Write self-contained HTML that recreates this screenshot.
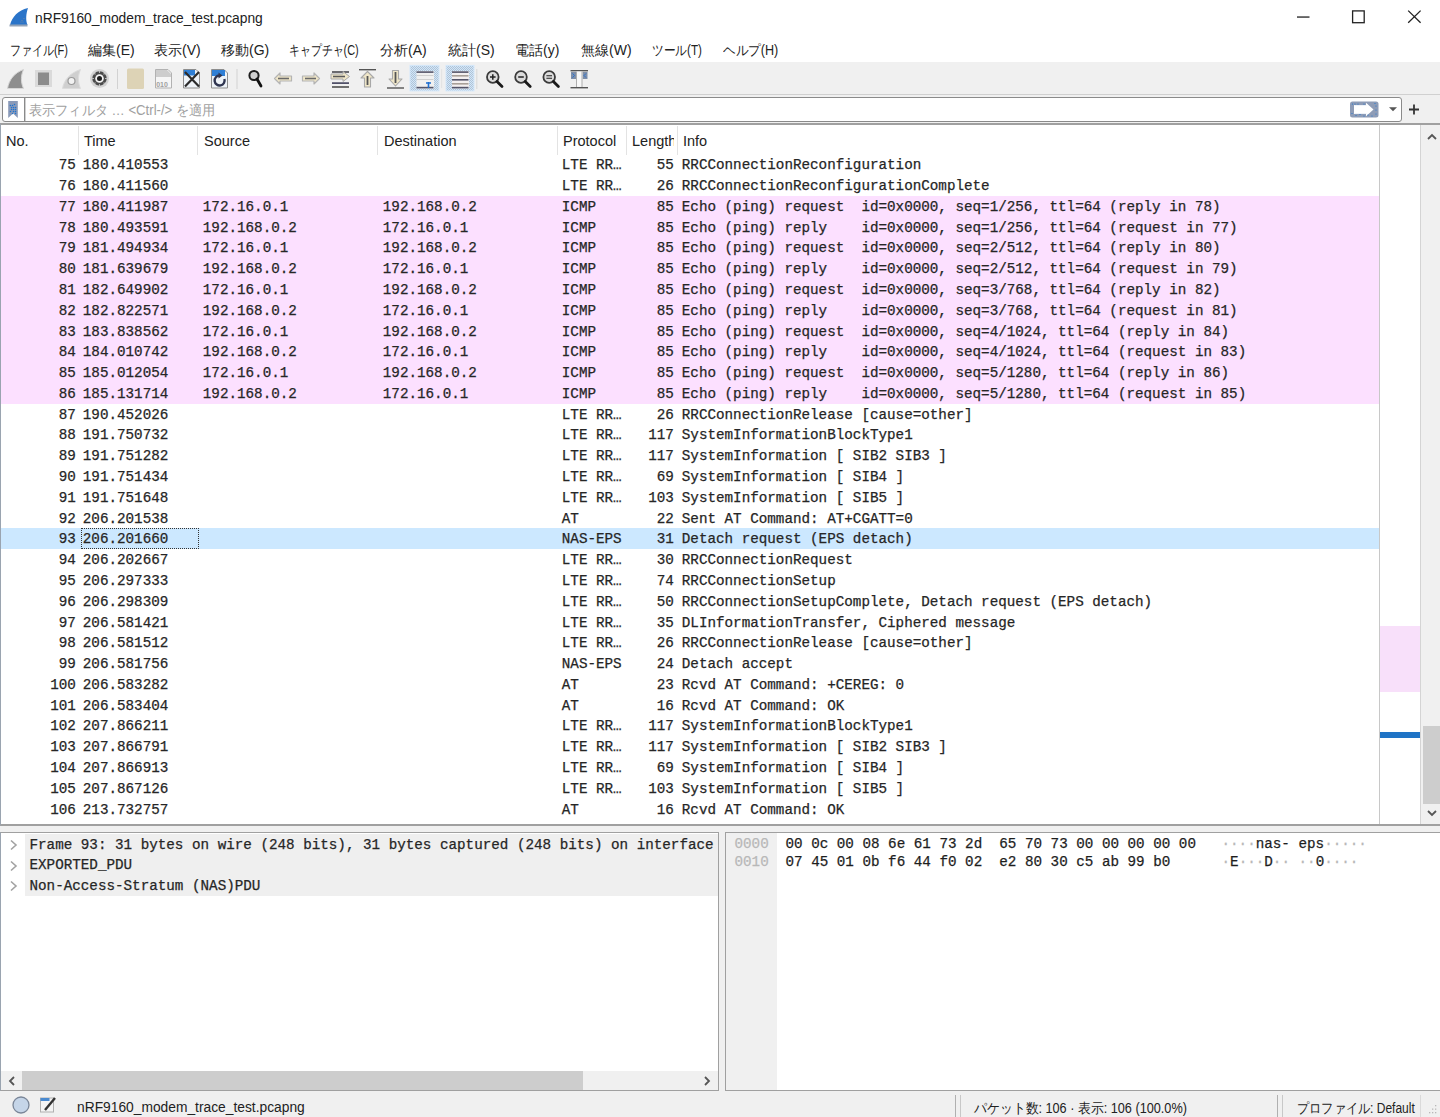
<!DOCTYPE html>
<html><head><meta charset="utf-8">
<style>
*{margin:0;padding:0;box-sizing:border-box}
html,body{width:1440px;height:1117px;overflow:hidden;background:#f0f0f0;font-family:"Liberation Sans",sans-serif;color:#000}
.abs{position:absolute}
#title{left:0;top:0;width:1440px;height:33px;background:#fff}
#title .t{left:35px;top:11px;font-size:13.8px;color:#222;white-space:nowrap}
#menu{left:0;top:33px;width:1440px;height:29px;background:#fff}
#menu span{position:absolute;top:9px;font-size:14px;color:#222;white-space:nowrap;transform-origin:0 50%}
#tool{left:0;top:62px;width:1440px;height:33px;background:#f0f0f0;border-bottom:1px solid #d0d0d0}
#filt{left:0;top:95px;width:1440px;height:29px;background:#f0f0f0}
#fbox{left:2px;top:97px;width:1400px;height:24.5px;background:#fff;border:1.3px solid #8a8a8a;border-radius:3px}
#fbox .ph{position:absolute;left:26px;top:4px;font-size:14px;color:#a0a0a0;white-space:nowrap;transform:scaleX(0.94);transform-origin:0 50%}
#plist{left:0;top:122.8px;width:1440px;height:703.5px;background:#fff;border-top:2.2px solid #a0a0a0;border-left:1px solid #9aa4b0;border-bottom:2px solid #a0a0a0;overflow:hidden}
.hdr{position:absolute;top:0;height:30px;font-size:14.5px;color:#222}
.hdr span{position:absolute;top:8.5px;white-space:nowrap}
.hsep{position:absolute;top:1px;width:1px;height:29px;background:#e3e3e3}
.r{position:absolute;left:0;width:1378px;height:20.8px;font-family:"Liberation Mono",monospace;font-size:14.25px;color:#262626;white-space:pre;-webkit-text-stroke:0.25px #262626}
.r.pk{background:#fce0ff}
.r.sel{background:#cce8ff}
.focus{position:absolute;left:80px;top:0;width:117.5px;height:20.5px;border:1px dotted #333}
.c{position:absolute;top:3.2px}
.no{right:1303.2px;text-align:right}
.tm{left:81.8px}
.src{left:201.8px}
.dst{left:381.8px}
.pr{left:560.8px}
.ln{right:705.2px;text-align:right}
.inf{left:680.8px}

#det{left:0;top:832px;width:719px;height:259px;background:#fff;border:1px solid #a0a0a0;border-left-color:#9aa4b0;overflow:hidden}
.drow{position:absolute;left:24px;width:700px;height:20.8px;background:#efefef}
.dtx{position:absolute;left:28.5px;font-family:"Liberation Mono",monospace;font-size:14.25px;color:#262626;white-space:pre;-webkit-text-stroke:0.25px #262626}
.arr{position:absolute;left:8px}
#hex{left:724.5px;top:832px;width:715.5px;height:259px;background:#fff;border:1px solid #a0a0a0;border-right:none;overflow:hidden}
.htx{position:absolute;font-family:"Liberation Mono",monospace;font-size:14.25px;color:#1e1e1e;white-space:pre;-webkit-text-stroke:0.25px currentColor}
.off{color:#b8b8b8}
.nd{color:#b8b8b8}
#status{left:0;top:1091px;width:1440px;height:26px;background:#f0f0f0}
#status .st{position:absolute;top:9px;font-size:13.8px;color:#222;white-space:nowrap;transform-origin:0 50%}
.vsep{position:absolute;top:4px;width:1.3px;height:22px;background:#b0b0b0}
</style></head><body>
<div id="title" class="abs">
  <svg class="abs" style="left:0;top:0" width="40" height="33" viewBox="0 0 40 33"><path d="M10 25 C12 17 18 10 28 8 C26 14 25.5 20 27.5 25 Z" fill="#2a74c9"/><rect x="9.5" y="24.5" width="18" height="2" fill="#93a3b8"/><g fill="#7a8aa0"><circle cx="22" cy="20.5" r="0.6"/><circle cx="24" cy="18.5" r="0.6"/><circle cx="21" cy="22" r="0.6"/><circle cx="23" cy="22" r="0.6"/></g></svg>
  <div class="abs t">nRF9160_modem_trace_test.pcapng</div>
  <svg class="abs" style="left:1296px;top:10px" width="130" height="16" viewBox="0 0 130 16"><rect x="1" y="6.4" width="12.5" height="1.3" fill="#222"/><rect x="56.6" y="0.9" width="11.6" height="11.8" fill="none" stroke="#222" stroke-width="1.3"/><path d="M112.2 0.6 L124.6 12.8 M124.6 0.6 L112.2 12.8" stroke="#222" stroke-width="1.3"/></svg>
</div>
<div id="menu" class="abs">
  <span style="left:10px;transform:scaleX(0.785)">ファイル(F)</span>
  <span style="left:88px">編集(E)</span>
  <span style="left:154px">表示(V)</span>
  <span style="left:221px">移動(G)</span>
  <span style="left:289px;transform:scaleX(0.78)">キャプチャ(C)</span>
  <span style="left:380px">分析(A)</span>
  <span style="left:448px">統計(S)</span>
  <span style="left:515px">電話(y)</span>
  <span style="left:581px">無線(W)</span>
  <span style="left:652px;transform:scaleX(0.835)">ツール(T)</span>
  <span style="left:723px;transform:scaleX(0.9)">ヘルプ(H)</span>
</div>
<div id="tool" class="abs">
<svg class="abs" style="left:0;top:0" width="600" height="32" viewBox="0 62 600 32">
  <defs>
    <pattern id="dith" width="2" height="2" patternUnits="userSpaceOnUse"><rect width="2" height="2" fill="#d2e6f8"/><rect width="1" height="1" fill="#b0c4d8"/><rect x="1" y="1" width="1" height="1" fill="#b0c4d8"/></pattern>
  </defs>
  <!-- 1 shark fin gray -->
  <path d="M7.5 88.5 C9 80 14 73 23.5 69.5 C21 75 20.5 82 23.5 88.5 Z" fill="#8e8e8e" stroke="#d6d6d6" stroke-width="1"/>
  <!-- 2 stop -->
  <rect x="35" y="70" width="17" height="17" fill="#dadada"/>
  <rect x="38" y="72.5" width="11" height="12.5" fill="#8c8c8c"/>
  <!-- 3 restart -->
  <path d="M62.5 88.5 C64 80 70 73 80.5 69.5 C78 75 77.5 82 80.5 88.5 Z" fill="#cfcfcf" stroke="#dcdcdc" stroke-width="1"/>
  <circle cx="71.5" cy="81" r="3.5" fill="#f2f2f2" stroke="#9a9a9a" stroke-width="1.2"/>
  <!-- 4 gear -->
  <circle cx="99.5" cy="78.5" r="9.5" fill="#d2d2d2"/>
  <circle cx="99.5" cy="78.5" r="7.2" fill="#4a4a4a"/>
  <circle cx="99.5" cy="78.5" r="4.3" fill="#f2f2f2"/>
  <circle cx="99.5" cy="78.5" r="2.5" fill="#1e1e1e"/>
  <g stroke="#d8d8d8" stroke-width="1.1"><path d="M99.5 71.3 V72.8 M99.5 84.2 V85.7 M92.3 78.5 H93.8 M105.2 78.5 H106.7 M94.4 73.4 L95.4 74.4 M103.6 82.6 L104.6 83.6 M104.6 73.4 L103.6 74.4 M95.4 82.6 L94.4 83.6"/></g>
  <rect x="117" y="69" width="1" height="20" fill="#d2d2d2"/>
  <!-- 6 open -->
  <rect x="127" y="68.5" width="17" height="20.5" rx="1.5" fill="#ddd3b6"/>
  <!-- 7 save -->
  <path d="M155.5 69.5 H168 L171.5 73 V88 H155.5 Z" fill="#f6f6f6" stroke="#b2b2b2" stroke-width="1"/>
  <path d="M156 70 H167 L171 74 V77 H156 Z" fill="#cdcdcd"/>
  <text x="156.2" y="86.5" font-family="Liberation Sans" font-weight="bold" font-size="7" fill="#a0a0a0">010</text>
  <!-- 8 close -->
  <path d="M183.5 69.5 H196 L199.5 73 V88 H183.5 Z" fill="#eef3f8" stroke="#8d8d8d" stroke-width="1"/>
  <rect x="184" y="70" width="11" height="5.5" fill="#2e7fd6"/>
  <path d="M185 72 L199 86.5 M199 72 L185 86.5" stroke="#2b2b2b" stroke-width="2.2"/>
  <!-- 9 reload -->
  <path d="M211.5 69.5 H224 L227.5 73 V88 H211.5 Z" fill="#eef3f8" stroke="#8d8d8d" stroke-width="1"/>
  <rect x="212" y="70" width="13" height="6" fill="#2e7fd6"/>
  <path d="M224.4 79 A5 5 0 1 1 219.5 75.5" fill="none" stroke="#2f3550" stroke-width="2.4"/><path d="M218.5 72.5 L222.5 75.5 L218.5 78.5 Z" fill="#2f3550"/>
  <rect x="236.5" y="69" width="1" height="20" fill="#d2d2d2"/>
  <!-- 11 find -->
  <circle cx="254" cy="75.5" r="4.6" fill="#cfcfcf" stroke="#1d1d1d" stroke-width="2"/>
  <path d="M257 79 L261 86" stroke="#111" stroke-width="2.8" stroke-linecap="round"/>
  <!-- 12 back -->
  <path d="M274.5 78.5 L280 73 V76 H291.5 V81 H280 V84 Z" fill="#efe6c8" stroke="#b4b4b4" stroke-width="1.2" stroke-linejoin="round"/>
  <path d="M278 78.5 H289" stroke="#6a6a6a" stroke-width="1.6"/>
  <!-- 13 forward -->
  <path d="M319.5 78.5 L314 73 V76 H302.5 V81 H314 V84 Z" fill="#efe6c8" stroke="#b4b4b4" stroke-width="1.2" stroke-linejoin="round"/>
  <path d="M305 78.5 H316" stroke="#6a6a6a" stroke-width="1.6"/>
  <!-- 14 goto -->
  <rect x="332" y="71.2" width="17" height="1.6" fill="#4a4a50"/>
  <rect x="332" y="82.3" width="17" height="1.6" fill="#40405a"/>
  <rect x="332" y="86.2" width="17" height="1.6" fill="#505050"/>
  <path d="M331 74 H343 V71.5 L349.5 76.5 L343 81.5 V79 H331 Z" fill="#efe6c8" stroke="#a8a8a8" stroke-width="1"/>
  <path d="M333 76.5 H345" stroke="#5a5a5a" stroke-width="1.6"/>
  <!-- 15 first -->
  <rect x="359" y="69" width="17" height="1.4" fill="#555"/>
  <path d="M367.5 71.5 L374 78 H370.5 V87 H364.5 V78 H361 Z" fill="#efe6c8" stroke="#a8a8a8" stroke-width="1.1" stroke-linejoin="round"/>
  <path d="M367.5 76 V85" stroke="#555" stroke-width="1.8"/>
  <!-- 16 last -->
  <rect x="387" y="87.3" width="17" height="1.4" fill="#555"/>
  <path d="M395.5 86 L402 79 H398.5 V70.5 H392.5 V79 H389 Z" fill="#efe6c8" stroke="#a8a8a8" stroke-width="1.1" stroke-linejoin="round"/>
  <path d="M395.5 72 V83" stroke="#555" stroke-width="1.8"/>
  <!-- 17 autoscroll -->
  <rect x="410" y="65.4" width="29" height="25.5" fill="url(#dith)" stroke="#d4e8fb" stroke-width="1"/>
  <rect x="416.5" y="71" width="17.5" height="17.5" fill="#f0f0f0"/>
  <rect x="416.5" y="71.3" width="17" height="1.6" fill="#55556a"/>
  <rect x="416.5" y="86.8" width="17" height="1.6" fill="#55556a"/>
  <rect x="416.5" y="75" width="17" height="0.8" fill="#c8c8c8"/>
  <rect x="416.5" y="79" width="17" height="0.8" fill="#c8c8c8"/>
  <path d="M426 83 L431 83 M428.5 82 V88" stroke="#1f6fd0" stroke-width="1.6"/>
  <rect x="441.3" y="69" width="0.8" height="19" fill="#dedede"/>
  <!-- 18 colorize -->
  <rect x="446" y="65.4" width="28" height="25.5" fill="url(#dith)" stroke="#d4e8fb" stroke-width="1"/>
  <rect x="452" y="71" width="17" height="17.5" fill="#f4f0f0"/>
  <rect x="452" y="71.3" width="16.5" height="1.6" fill="#55556a"/>
  <rect x="452" y="75" width="16.5" height="1.6" fill="#a8a098"/>
  <rect x="452" y="79" width="16.5" height="1.6" fill="#55556a"/>
  <rect x="452" y="83" width="16.5" height="1.6" fill="#a8a098"/>
  <rect x="452" y="86.8" width="16.5" height="1.6" fill="#55556a"/>
  <rect x="476.3" y="69" width="1" height="20" fill="#d8d8d8"/>
  <!-- 20 zoom in -->
  <circle cx="492.8" cy="77" r="5.8" fill="#dcdcdc" stroke="#3a3a3a" stroke-width="1.8"/>
  <path d="M490 77 H495.6 M492.8 74.2 V79.8" stroke="#222" stroke-width="1.5"/>
  <path d="M497 81.5 L502 86.5" stroke="#1a1a1a" stroke-width="2.8" stroke-linecap="round"/>
  <!-- 21 zoom out -->
  <circle cx="521" cy="77" r="5.8" fill="#dcdcdc" stroke="#3a3a3a" stroke-width="1.8"/>
  <path d="M518.2 77 H523.8" stroke="#222" stroke-width="1.5"/>
  <path d="M525.2 81.5 L530.2 86.5" stroke="#1a1a1a" stroke-width="2.8" stroke-linecap="round"/>
  <!-- 22 zoom reset -->
  <circle cx="549.2" cy="77" r="5.8" fill="#dcdcdc" stroke="#3a3a3a" stroke-width="1.8"/>
  <path d="M546.4 75.8 H552 M546.4 78.3 H552" stroke="#222" stroke-width="1.1"/>
  <path d="M553.4 81.5 L558.4 86.5" stroke="#1a1a1a" stroke-width="2.8" stroke-linecap="round"/>
  <!-- 23 resize -->
  <rect x="570.5" y="70" width="17.5" height="1.4" fill="#555"/>
  <rect x="570.5" y="87" width="17.5" height="1.4" fill="#555"/>
  <rect x="571" y="72" width="5" height="7" fill="#7f8fa8"/>
  <rect x="582.5" y="72" width="5" height="7" fill="#7f8fa8"/>
  <rect x="576" y="71.5" width="6.5" height="15" fill="#f8f8f8"/>
  <path d="M576.5 71.5 V87 M582 71.5 V87" stroke="#9a9a9a" stroke-width="0.8"/>
  <path d="M572.5 73.5 L574.5 75.5 L572.5 77.5 M586 73.5 L584 75.5 L586 77.5" fill="none" stroke="#2a72d0" stroke-width="1"/>
</svg>
</div>
<div id="filt" class="abs"></div>
<div id="fbox" class="abs">
  <div class="abs ph">表示フィルタ … &lt;Ctrl-/&gt; を適用</div>
</div>
<svg class="abs" style="left:0;top:94px" width="1440" height="30" viewBox="0 94 1440 30">
  <path d="M8.2 101 H17.8 V118 L13 113.5 L8.2 118 Z" fill="#8a9ab8"/>
  <g fill="#1f74d0"><circle cx="10.4" cy="105.5" r="0.75"/><circle cx="12.5" cy="105.5" r="0.75"/><circle cx="14.5" cy="104.5" r="0.75"/><circle cx="11.5" cy="107.5" r="0.75"/><circle cx="13.5" cy="107.5" r="0.75"/><circle cx="15.5" cy="107.5" r="0.75"/><circle cx="11.5" cy="109.5" r="0.75"/><circle cx="13.5" cy="109.5" r="0.75"/><circle cx="15.5" cy="109.5" r="0.75"/><circle cx="10.5" cy="111.5" r="0.75"/><circle cx="13.5" cy="111.5" r="0.75"/><circle cx="15.5" cy="111.5" r="0.75"/><circle cx="12.5" cy="113.5" r="0.75"/><circle cx="15.5" cy="113.5" r="0.75"/></g>
  <rect x="24" y="97.5" width="1.4" height="23.5" fill="#8a8a8a"/>
  <rect x="1350" y="101.5" width="28.5" height="16" rx="2.5" fill="#8e9cb6"/>
  <path d="M1354 105 H1366 V102.8 L1373.5 109.5 L1366 116.2 V114 H1354 Z" fill="#fff"/>
  <path d="M1354.5 105.5 H1366.5 M1354.5 113.5 H1366.5" stroke="#dfe8f4" stroke-width="0.6"/>
  <g fill="#1f74d0"><circle cx="1352.5" cy="104" r="0.6"/><circle cx="1355" cy="104" r="0.6"/><circle cx="1358" cy="104" r="0.6"/><circle cx="1364" cy="104" r="0.6"/><circle cx="1375" cy="103.5" r="0.6"/><circle cx="1376" cy="106" r="0.6"/><circle cx="1376" cy="110" r="0.6"/><circle cx="1376" cy="114" r="0.6"/><circle cx="1352" cy="113.5" r="0.6"/><circle cx="1356" cy="115.5" r="0.6"/><circle cx="1360" cy="114.5" r="0.6"/><circle cx="1364" cy="116" r="0.6"/><circle cx="1368" cy="115" r="0.6"/><circle cx="1372" cy="116" r="0.6"/></g>
  <path d="M1389 107.2 H1397 L1393 111.2 Z" fill="#555"/>
  <path d="M1409 109.5 H1419 M1414 104.5 V114.5" stroke="#333" stroke-width="1.8"/>
</svg>
<div id="plist" class="abs">
  <div class="hdr" style="left:0;width:1378px">
    <span style="left:5px">No.</span>
    <span style="left:83px">Time</span>
    <span style="left:203px">Source</span>
    <span style="left:383px">Destination</span>
    <span style="left:562px">Protocol</span>
    <span style="left:631px;width:41.5px;overflow:hidden">Length</span>
    <span style="left:682px">Info</span>
    <div class="hsep" style="left:76.8px"></div>
    <div class="hsep" style="left:196.3px"></div>
    <div class="hsep" style="left:376.3px"></div>
    <div class="hsep" style="left:555.8px"></div>
    <div class="hsep" style="left:624.8px"></div>
    <div class="hsep" style="left:676.3px"></div>
  </div>
  <div class="abs" style="left:1377.5px;top:0;width:1.5px;height:700px;background:#c8c8c8"></div>
  <div class="abs" style="left:1379px;top:501.5px;width:39.5px;height:66px;background:#f8e0fa"></div>
  <div class="abs" style="left:1379px;top:607px;width:39.5px;height:6px;background:#1f74c6"></div>
  <div class="abs" style="left:1418.5px;top:0;width:1.5px;height:700px;background:#d4d4d4"></div>
  <div class="abs" style="left:1420px;top:0;width:20px;height:701px;background:#f0f0f0"></div>
  <div class="abs" style="left:1421.5px;top:601.3px;width:18.5px;height:78px;background:#cdcdcd"></div>
  <svg class="abs" style="left:1424px;top:5px" width="14" height="12" viewBox="0 0 14 12"><path d="M3 9 L7 5 L11 9" fill="none" stroke="#555" stroke-width="1.8"/></svg>
  <svg class="abs" style="left:1424px;top:683px" width="14" height="12" viewBox="0 0 14 12"><path d="M3 3 L7 7 L11 3" fill="none" stroke="#555" stroke-width="1.8"/></svg>
<div class="r" style="top:29.4px"><span class="c no">75</span><span class="c tm">180.410553</span><span class="c src"></span><span class="c dst"></span><span class="c pr">LTE RR…</span><span class="c ln">55</span><span class="c inf">RRCConnectionReconfiguration</span></div>
<div class="r" style="top:50.2px"><span class="c no">76</span><span class="c tm">180.411560</span><span class="c src"></span><span class="c dst"></span><span class="c pr">LTE RR…</span><span class="c ln">26</span><span class="c inf">RRCConnectionReconfigurationComplete</span></div>
<div class="r pk" style="top:71.0px"><span class="c no">77</span><span class="c tm">180.411987</span><span class="c src">172.16.0.1</span><span class="c dst">192.168.0.2</span><span class="c pr">ICMP</span><span class="c ln">85</span><span class="c inf">Echo (ping) request  id=0x0000, seq=1/256, ttl=64 (reply in 78)</span></div>
<div class="r pk" style="top:91.7px"><span class="c no">78</span><span class="c tm">180.493591</span><span class="c src">192.168.0.2</span><span class="c dst">172.16.0.1</span><span class="c pr">ICMP</span><span class="c ln">85</span><span class="c inf">Echo (ping) reply    id=0x0000, seq=1/256, ttl=64 (request in 77)</span></div>
<div class="r pk" style="top:112.5px"><span class="c no">79</span><span class="c tm">181.494934</span><span class="c src">172.16.0.1</span><span class="c dst">192.168.0.2</span><span class="c pr">ICMP</span><span class="c ln">85</span><span class="c inf">Echo (ping) request  id=0x0000, seq=2/512, ttl=64 (reply in 80)</span></div>
<div class="r pk" style="top:133.3px"><span class="c no">80</span><span class="c tm">181.639679</span><span class="c src">192.168.0.2</span><span class="c dst">172.16.0.1</span><span class="c pr">ICMP</span><span class="c ln">85</span><span class="c inf">Echo (ping) reply    id=0x0000, seq=2/512, ttl=64 (request in 79)</span></div>
<div class="r pk" style="top:154.1px"><span class="c no">81</span><span class="c tm">182.649902</span><span class="c src">172.16.0.1</span><span class="c dst">192.168.0.2</span><span class="c pr">ICMP</span><span class="c ln">85</span><span class="c inf">Echo (ping) request  id=0x0000, seq=3/768, ttl=64 (reply in 82)</span></div>
<div class="r pk" style="top:174.9px"><span class="c no">82</span><span class="c tm">182.822571</span><span class="c src">192.168.0.2</span><span class="c dst">172.16.0.1</span><span class="c pr">ICMP</span><span class="c ln">85</span><span class="c inf">Echo (ping) reply    id=0x0000, seq=3/768, ttl=64 (request in 81)</span></div>
<div class="r pk" style="top:195.6px"><span class="c no">83</span><span class="c tm">183.838562</span><span class="c src">172.16.0.1</span><span class="c dst">192.168.0.2</span><span class="c pr">ICMP</span><span class="c ln">85</span><span class="c inf">Echo (ping) request  id=0x0000, seq=4/1024, ttl=64 (reply in 84)</span></div>
<div class="r pk" style="top:216.4px"><span class="c no">84</span><span class="c tm">184.010742</span><span class="c src">192.168.0.2</span><span class="c dst">172.16.0.1</span><span class="c pr">ICMP</span><span class="c ln">85</span><span class="c inf">Echo (ping) reply    id=0x0000, seq=4/1024, ttl=64 (request in 83)</span></div>
<div class="r pk" style="top:237.2px"><span class="c no">85</span><span class="c tm">185.012054</span><span class="c src">172.16.0.1</span><span class="c dst">192.168.0.2</span><span class="c pr">ICMP</span><span class="c ln">85</span><span class="c inf">Echo (ping) request  id=0x0000, seq=5/1280, ttl=64 (reply in 86)</span></div>
<div class="r pk" style="top:258.0px"><span class="c no">86</span><span class="c tm">185.131714</span><span class="c src">192.168.0.2</span><span class="c dst">172.16.0.1</span><span class="c pr">ICMP</span><span class="c ln">85</span><span class="c inf">Echo (ping) reply    id=0x0000, seq=5/1280, ttl=64 (request in 85)</span></div>
<div class="r" style="top:278.8px"><span class="c no">87</span><span class="c tm">190.452026</span><span class="c src"></span><span class="c dst"></span><span class="c pr">LTE RR…</span><span class="c ln">26</span><span class="c inf">RRCConnectionRelease [cause=other]</span></div>
<div class="r" style="top:299.5px"><span class="c no">88</span><span class="c tm">191.750732</span><span class="c src"></span><span class="c dst"></span><span class="c pr">LTE RR…</span><span class="c ln">117</span><span class="c inf">SystemInformationBlockType1</span></div>
<div class="r" style="top:320.3px"><span class="c no">89</span><span class="c tm">191.751282</span><span class="c src"></span><span class="c dst"></span><span class="c pr">LTE RR…</span><span class="c ln">117</span><span class="c inf">SystemInformation [ SIB2 SIB3 ]</span></div>
<div class="r" style="top:341.1px"><span class="c no">90</span><span class="c tm">191.751434</span><span class="c src"></span><span class="c dst"></span><span class="c pr">LTE RR…</span><span class="c ln">69</span><span class="c inf">SystemInformation [ SIB4 ]</span></div>
<div class="r" style="top:361.9px"><span class="c no">91</span><span class="c tm">191.751648</span><span class="c src"></span><span class="c dst"></span><span class="c pr">LTE RR…</span><span class="c ln">103</span><span class="c inf">SystemInformation [ SIB5 ]</span></div>
<div class="r" style="top:382.7px"><span class="c no">92</span><span class="c tm">206.201538</span><span class="c src"></span><span class="c dst"></span><span class="c pr">AT</span><span class="c ln">22</span><span class="c inf">Sent AT Command: AT+CGATT=0</span></div>
<div class="r sel" style="top:403.4px"><div class="focus"></div><span class="c no">93</span><span class="c tm">206.201660</span><span class="c src"></span><span class="c dst"></span><span class="c pr">NAS-EPS</span><span class="c ln">31</span><span class="c inf">Detach request (EPS detach)</span></div>
<div class="r" style="top:424.2px"><span class="c no">94</span><span class="c tm">206.202667</span><span class="c src"></span><span class="c dst"></span><span class="c pr">LTE RR…</span><span class="c ln">30</span><span class="c inf">RRCConnectionRequest</span></div>
<div class="r" style="top:445.0px"><span class="c no">95</span><span class="c tm">206.297333</span><span class="c src"></span><span class="c dst"></span><span class="c pr">LTE RR…</span><span class="c ln">74</span><span class="c inf">RRCConnectionSetup</span></div>
<div class="r" style="top:465.8px"><span class="c no">96</span><span class="c tm">206.298309</span><span class="c src"></span><span class="c dst"></span><span class="c pr">LTE RR…</span><span class="c ln">50</span><span class="c inf">RRCConnectionSetupComplete, Detach request (EPS detach)</span></div>
<div class="r" style="top:486.6px"><span class="c no">97</span><span class="c tm">206.581421</span><span class="c src"></span><span class="c dst"></span><span class="c pr">LTE RR…</span><span class="c ln">35</span><span class="c inf">DLInformationTransfer, Ciphered message</span></div>
<div class="r" style="top:507.3px"><span class="c no">98</span><span class="c tm">206.581512</span><span class="c src"></span><span class="c dst"></span><span class="c pr">LTE RR…</span><span class="c ln">26</span><span class="c inf">RRCConnectionRelease [cause=other]</span></div>
<div class="r" style="top:528.1px"><span class="c no">99</span><span class="c tm">206.581756</span><span class="c src"></span><span class="c dst"></span><span class="c pr">NAS-EPS</span><span class="c ln">24</span><span class="c inf">Detach accept</span></div>
<div class="r" style="top:548.9px"><span class="c no">100</span><span class="c tm">206.583282</span><span class="c src"></span><span class="c dst"></span><span class="c pr">AT</span><span class="c ln">23</span><span class="c inf">Rcvd AT Command: +CEREG: 0</span></div>
<div class="r" style="top:569.7px"><span class="c no">101</span><span class="c tm">206.583404</span><span class="c src"></span><span class="c dst"></span><span class="c pr">AT</span><span class="c ln">16</span><span class="c inf">Rcvd AT Command: OK</span></div>
<div class="r" style="top:590.5px"><span class="c no">102</span><span class="c tm">207.866211</span><span class="c src"></span><span class="c dst"></span><span class="c pr">LTE RR…</span><span class="c ln">117</span><span class="c inf">SystemInformationBlockType1</span></div>
<div class="r" style="top:611.2px"><span class="c no">103</span><span class="c tm">207.866791</span><span class="c src"></span><span class="c dst"></span><span class="c pr">LTE RR…</span><span class="c ln">117</span><span class="c inf">SystemInformation [ SIB2 SIB3 ]</span></div>
<div class="r" style="top:632.0px"><span class="c no">104</span><span class="c tm">207.866913</span><span class="c src"></span><span class="c dst"></span><span class="c pr">LTE RR…</span><span class="c ln">69</span><span class="c inf">SystemInformation [ SIB4 ]</span></div>
<div class="r" style="top:652.8px"><span class="c no">105</span><span class="c tm">207.867126</span><span class="c src"></span><span class="c dst"></span><span class="c pr">LTE RR…</span><span class="c ln">103</span><span class="c inf">SystemInformation [ SIB5 ]</span></div>
<div class="r" style="top:673.6px"><span class="c no">106</span><span class="c tm">213.732757</span><span class="c src"></span><span class="c dst"></span><span class="c pr">AT</span><span class="c ln">16</span><span class="c inf">Rcvd AT Command: OK</span></div>
</div>
<div id="det" class="abs">
  <div class="drow" style="top:0.5px;height:62.3px"></div>
  <svg class="arr" style="top:6px" width="10" height="12" viewBox="0 0 10 12"><path d="M2 1.5 L7 6 L2 10.5" fill="none" stroke="#a2a2a2" stroke-width="1.6"/></svg>
  <svg class="arr" style="top:26.5px" width="10" height="12" viewBox="0 0 10 12"><path d="M2 1.5 L7 6 L2 10.5" fill="none" stroke="#a2a2a2" stroke-width="1.6"/></svg>
  <svg class="arr" style="top:47px" width="10" height="12" viewBox="0 0 10 12"><path d="M2 1.5 L7 6 L2 10.5" fill="none" stroke="#a2a2a2" stroke-width="1.6"/></svg>
  <div class="dtx" style="top:3.8px">Frame 93: 31 bytes on wire (248 bits), 31 bytes captured (248 bits) on interface</div>
  <div class="dtx" style="top:24.3px">EXPORTED_PDU</div>
  <div class="dtx" style="top:44.8px">Non-Access-Stratum (NAS)PDU</div>
  <div class="abs" style="left:0;top:238px;width:717px;height:19px;background:#f0f0f0"></div>
  <div class="abs" style="left:20.5px;top:238px;width:561px;height:19px;background:#cdcdcd"></div>
  <svg class="abs" style="left:5px;top:242px" width="12" height="12" viewBox="0 0 12 12"><path d="M8 2 L4 6 L8 10" fill="none" stroke="#555" stroke-width="1.8"/></svg>
  <svg class="abs" style="left:700px;top:242px" width="12" height="12" viewBox="0 0 12 12"><path d="M4 2 L8 6 L4 10" fill="none" stroke="#555" stroke-width="1.8"/></svg>
</div>
<div id="hex" class="abs">
  <div class="abs" style="left:0;top:0;width:51.5px;height:260px;background:#f0f0f0"></div>
  <div class="htx off" style="left:9px;top:3.4px">0000</div>
  <div class="htx off" style="left:9px;top:21px">0010</div>
  <div class="htx" style="left:60px;top:3.4px">00 0c 00 08 6e 61 73 2d  65 70 73 00 00 00 00 00</div>
  <div class="htx" style="left:60px;top:21px">07 45 01 0b f6 44 f0 02  e2 80 30 c5 ab 99 b0</div>
  <div class="htx" style="left:496px;top:3.4px"><span class="nd">····</span>nas- eps<span class="nd">·····</span></div>
  <div class="htx" style="left:496px;top:21px"><span class="nd">·</span>E<span class="nd">···</span>D<span class="nd">··</span> <span class="nd">··</span>0<span class="nd">····</span></div>
</div>
<div id="status" class="abs">
  <svg class="abs" style="left:11px;top:4px" width="20" height="20" viewBox="0 0 20 20"><circle cx="10" cy="10" r="8" fill="#c5d5e8" stroke="#7a8698" stroke-width="1.3"/></svg>
  <svg class="abs" style="left:39px;top:4px" width="20" height="20" viewBox="0 0 20 20"><rect x="1.5" y="3" width="13" height="14" fill="#f4f4f4" stroke="#b0b0b0" stroke-width="1"/><rect x="1.5" y="3" width="9" height="3" fill="#4a8ad0"/><path d="M6 15 L16 3" stroke="#333" stroke-width="2.4"/></svg>
  <div class="st" style="left:77px">nRF9160_modem_trace_test.pcapng</div>
  <div class="vsep" style="left:955px"></div>
  <div class="vsep" style="left:959.5px;background:#c8c8c8"></div>
  <div class="st" style="left:974px;transform:scaleX(0.92)">パケット数: 106 · 表示: 106 (100.0%)</div>
  <div class="vsep" style="left:1277px"></div>
  <div class="vsep" style="left:1282px;background:#c8c8c8"></div>
  <div class="st" style="left:1297px;transform:scaleX(0.87)">プロファイル: Default</div>
  <div class="vsep" style="left:1420px;background:#dadada"></div>
  <svg class="abs" style="left:1424px;top:10px" width="16" height="16" viewBox="0 0 16 16"><g fill="#b8b8b8"><rect x="11" y="4" width="1.3" height="1.3"/><rect x="8" y="7.5" width="1.3" height="1.3"/><rect x="11" y="7.5" width="1.3" height="1.3"/><rect x="5" y="11" width="1.3" height="1.3"/><rect x="8" y="11" width="1.3" height="1.3"/><rect x="11" y="11" width="1.3" height="1.3"/></g></svg>
</div>
</body></html>
